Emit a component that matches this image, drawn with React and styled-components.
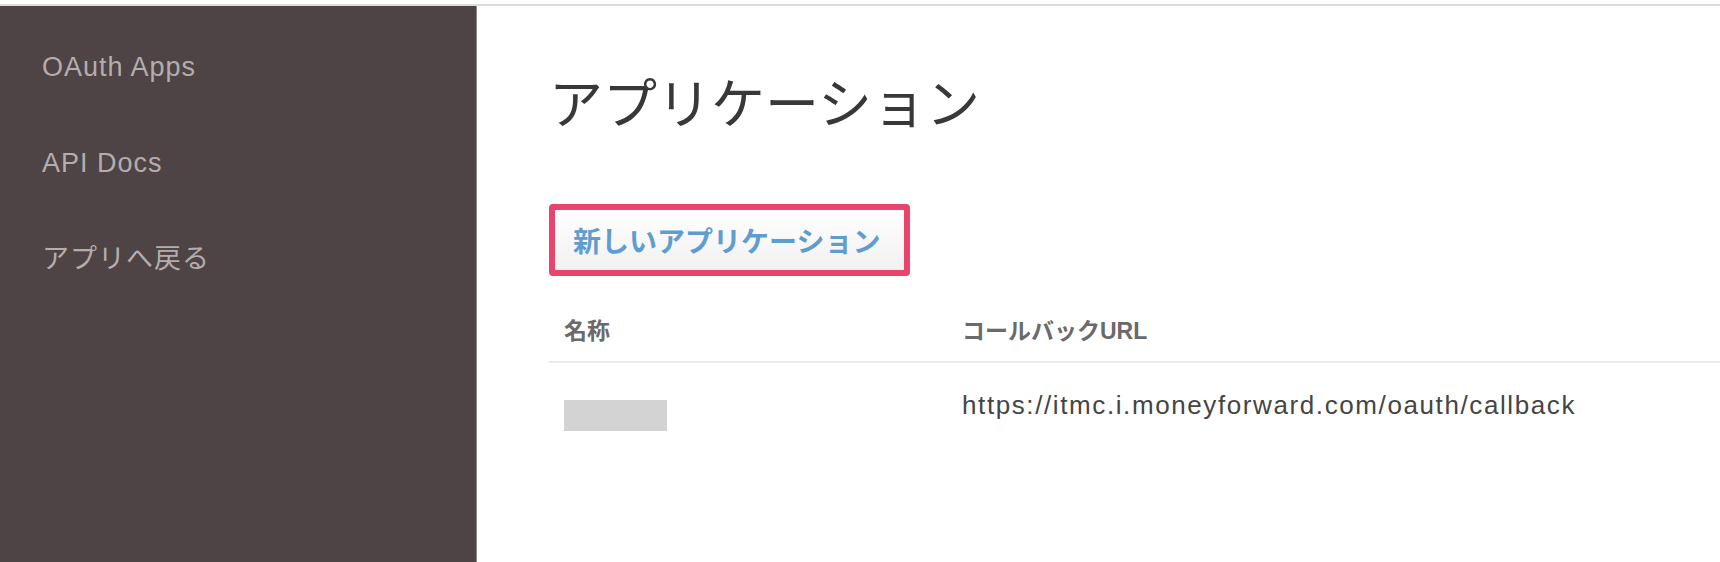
import React from 'react';
import styled, { createGlobalStyle } from 'styled-components';

const GlobalStyle = createGlobalStyle`
  html, body {
    margin: 0;
    padding: 0;
    background: #fff;
  }
  body {
    font-family: "Liberation Sans", "Noto Sans CJK JP", sans-serif;
  }
`;

const Page = styled.div`
  height: 562px;
  display: flex;
  flex-direction: column;
  overflow: hidden;
`;

const TopRule = styled.div`
  height: 4px;
  border-bottom: 2px solid #dcdcdc;
  flex-shrink: 0;
`;

const Layout = styled.div`
  flex: 1;
  display: flex;
`;

const Sidebar = styled.nav`
  width: 477px;
  flex-shrink: 0;
  background: #4e4446;
  border-right: 1px solid #8f8a8a;
  padding: 41px 0 0 42px;
  box-sizing: border-box;
  display: flex;
  flex-direction: column;
  gap: 56px;
`;

const NavLink = styled.a`
  font-size: 27px;
  line-height: 40px;
  color: #b3adad;
  letter-spacing: 1px;
  text-decoration: none;
`;

const Main = styled.main`
  flex: 1;
  padding: 63px 0 0 72px;
`;

const Title = styled.h1`
  margin: 0;
  font-family: "Noto Sans CJK JP", sans-serif;
  font-size: 54px;
  font-weight: 400;
  line-height: 64px;
  color: #383838;
`;

const Highlight = styled.div`
  display: inline-block;
  margin-top: 71px;
  border: 6px solid #e9446b;
  border-radius: 4px;
`;

const NewButton = styled.button`
  display: block;
  width: 349px;
  height: 60px;
  padding: 0 18px;
  border: none;
  background: linear-gradient(#ffffff, #f1f1f1);
  font-family: "Noto Sans CJK JP", sans-serif;
  font-size: 28px;
  font-weight: 700;
  color: #5f9cd0;
  text-align: left;
  cursor: pointer;
`;

const Table = styled.div`
  margin-top: 21px;
`;

const HeaderRow = styled.div`
  display: grid;
  grid-template-columns: 398px 1fr;
  height: 64px;
  align-items: center;
  border-bottom: 2px solid #ececec;
`;

const HeadCell = styled.div`
  padding: 0 15px;
  font-size: 23px;
  font-weight: 700;
  color: #6a6a6a;
`;

const Row = styled.div`
  display: grid;
  grid-template-columns: 398px 1fr;
  height: 90px;
  align-items: start;
`;

const Cell = styled.div`
  padding: ${p => p.$top}px 15px 0;
  font-size: 26px;
  line-height: 30px;
  color: #454545;
  letter-spacing: ${p => p.$spacing || 0}px;
`;

const Redacted = styled.div`
  width: 103px;
  height: 31px;
  background: #d3d3d3;
`;

const apps = [
  { url: 'https://itmc.i.moneyforward.com/oauth/callback' },
];

export default function App() {
  return (
    <Page>
      <GlobalStyle />
      <TopRule />
      <Layout>
        <Sidebar>
          <NavLink href="#">OAuth Apps</NavLink>
          <NavLink href="#">API Docs</NavLink>
          <NavLink href="#">アプリへ戻る</NavLink>
        </Sidebar>
        <Main>
          <Title>アプリケーション</Title>
          <Highlight>
            <NewButton>新しいアプリケーション</NewButton>
          </Highlight>
          <Table>
            <HeaderRow>
              <HeadCell>名称</HeadCell>
              <HeadCell>コールバックURL</HeadCell>
            </HeaderRow>
            {apps.map(app => (
              <Row key={app.url}>
                <Cell $top={37}>
                  <Redacted />
                </Cell>
                <Cell $top={27} $spacing={1.6}>{app.url}</Cell>
              </Row>
            ))}
          </Table>
        </Main>
      </Layout>
    </Page>
  );
}
